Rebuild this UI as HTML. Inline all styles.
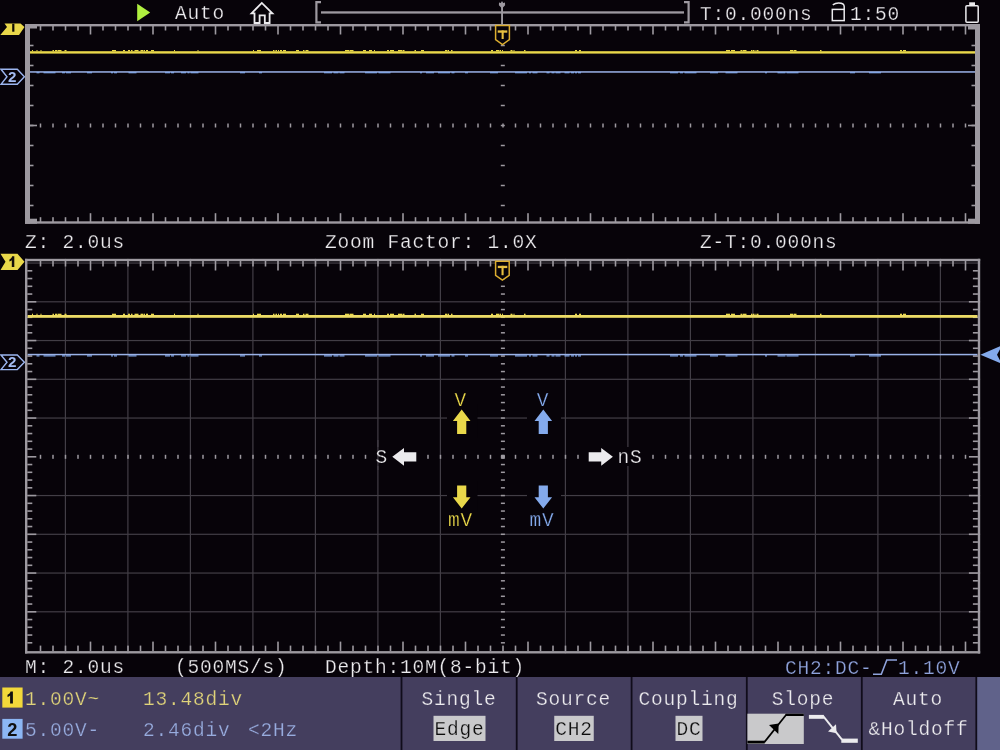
<!DOCTYPE html>
<html><head><meta charset="utf-8"><title>scope</title>
<style>html,body{margin:0;padding:0;background:#070309;width:1000px;height:750px;overflow:hidden}</style>
</head><body>
<svg width="1000" height="750" viewBox="0 0 1000 750" style="display:block;will-change:transform">
<rect width="1000" height="750" fill="#070309"/>
<g font-family='"Liberation Mono", monospace' style="white-space:pre">
<polygon points="137.2,3.7 150.2,12.4 137.2,21.3" fill="#b0f040"/>
<text x="175" y="19.3" fill="#ecebee" font-size="19.5" letter-spacing="0.8" stroke="#070309" stroke-width="0.25" >Auto</text>
<path d="M254.5,23 V13.3 H251.6 L261.8,2.9 L272.4,13.3 H269.6 V23 H264.8 V15.4 H259.6 V23 Z" fill="none" stroke="#ecebee" stroke-width="1.8" stroke-linejoin="miter"/>
<path d="M321,2.2 H316.4 V22.3 H321" fill="none" stroke="#9d99a0" stroke-width="2.2"/>
<path d="M684,2.2 H688.6 V22.3 H684" fill="none" stroke="#9d99a0" stroke-width="2.2"/>
<rect x="321.00" y="11.30" width="363.00" height="2.30" fill="#9d99a0"/>
<path d="M502,8.6 L498.9,5.2 L499,2.4 L500.8,2.9 L502,1.1 L503.2,2.9 L505,2.4 L505.1,5.2 Z" fill="#9d99a0"/>
<rect x="501.10" y="7.00" width="1.90" height="18.00" fill="#9d99a0"/>
<text x="700" y="19.5" fill="#ecebee" font-size="19.5" letter-spacing="0.8" stroke="#070309" stroke-width="0.25" >T:0.000ns</text>
<rect x="832.3" y="9.4" width="11.9" height="11.2" fill="none" stroke="#ecebee" stroke-width="1.5"/>
<path d="M844.2,9.4 V6.5 C844.2,3.5 841.5,2.9 838.6,2.9 C836,2.9 834.5,3.5 832.8,4.8" fill="none" stroke="#ecebee" stroke-width="1.5"/>
<text x="850" y="19.5" fill="#ecebee" font-size="19.5" letter-spacing="0.8" stroke="#070309" stroke-width="0.25" >1:50</text>
<rect x="965.9" y="5.8" width="12.3" height="16.4" rx="1" fill="none" stroke="#ecebee" stroke-width="1.5"/>
<rect x="969.20" y="2.30" width="5.80" height="3.00" fill="#ecebee"/>
<rect x="39.70" y="25.50" width="1.60" height="5.00" fill="#9d99a0"/>
<rect x="39.70" y="217.20" width="1.60" height="5.00" fill="#9d99a0"/>
<rect x="52.20" y="25.50" width="1.60" height="5.00" fill="#9d99a0"/>
<rect x="52.20" y="217.20" width="1.60" height="5.00" fill="#9d99a0"/>
<rect x="64.70" y="25.50" width="1.60" height="5.00" fill="#9d99a0"/>
<rect x="64.70" y="217.20" width="1.60" height="5.00" fill="#9d99a0"/>
<rect x="77.20" y="25.50" width="1.60" height="5.00" fill="#9d99a0"/>
<rect x="77.20" y="217.20" width="1.60" height="5.00" fill="#9d99a0"/>
<rect x="89.70" y="25.50" width="1.60" height="9.00" fill="#9d99a0"/>
<rect x="89.70" y="213.20" width="1.60" height="9.00" fill="#9d99a0"/>
<rect x="102.20" y="25.50" width="1.60" height="5.00" fill="#9d99a0"/>
<rect x="102.20" y="217.20" width="1.60" height="5.00" fill="#9d99a0"/>
<rect x="114.70" y="25.50" width="1.60" height="5.00" fill="#9d99a0"/>
<rect x="114.70" y="217.20" width="1.60" height="5.00" fill="#9d99a0"/>
<rect x="127.20" y="25.50" width="1.60" height="5.00" fill="#9d99a0"/>
<rect x="127.20" y="217.20" width="1.60" height="5.00" fill="#9d99a0"/>
<rect x="139.70" y="25.50" width="1.60" height="5.00" fill="#9d99a0"/>
<rect x="139.70" y="217.20" width="1.60" height="5.00" fill="#9d99a0"/>
<rect x="152.20" y="25.50" width="1.60" height="9.00" fill="#9d99a0"/>
<rect x="152.20" y="213.20" width="1.60" height="9.00" fill="#9d99a0"/>
<rect x="164.70" y="25.50" width="1.60" height="5.00" fill="#9d99a0"/>
<rect x="164.70" y="217.20" width="1.60" height="5.00" fill="#9d99a0"/>
<rect x="177.20" y="25.50" width="1.60" height="5.00" fill="#9d99a0"/>
<rect x="177.20" y="217.20" width="1.60" height="5.00" fill="#9d99a0"/>
<rect x="189.70" y="25.50" width="1.60" height="5.00" fill="#9d99a0"/>
<rect x="189.70" y="217.20" width="1.60" height="5.00" fill="#9d99a0"/>
<rect x="202.20" y="25.50" width="1.60" height="5.00" fill="#9d99a0"/>
<rect x="202.20" y="217.20" width="1.60" height="5.00" fill="#9d99a0"/>
<rect x="214.70" y="25.50" width="1.60" height="9.00" fill="#9d99a0"/>
<rect x="214.70" y="213.20" width="1.60" height="9.00" fill="#9d99a0"/>
<rect x="227.20" y="25.50" width="1.60" height="5.00" fill="#9d99a0"/>
<rect x="227.20" y="217.20" width="1.60" height="5.00" fill="#9d99a0"/>
<rect x="239.70" y="25.50" width="1.60" height="5.00" fill="#9d99a0"/>
<rect x="239.70" y="217.20" width="1.60" height="5.00" fill="#9d99a0"/>
<rect x="252.20" y="25.50" width="1.60" height="5.00" fill="#9d99a0"/>
<rect x="252.20" y="217.20" width="1.60" height="5.00" fill="#9d99a0"/>
<rect x="264.70" y="25.50" width="1.60" height="5.00" fill="#9d99a0"/>
<rect x="264.70" y="217.20" width="1.60" height="5.00" fill="#9d99a0"/>
<rect x="277.20" y="25.50" width="1.60" height="9.00" fill="#9d99a0"/>
<rect x="277.20" y="213.20" width="1.60" height="9.00" fill="#9d99a0"/>
<rect x="289.70" y="25.50" width="1.60" height="5.00" fill="#9d99a0"/>
<rect x="289.70" y="217.20" width="1.60" height="5.00" fill="#9d99a0"/>
<rect x="302.20" y="25.50" width="1.60" height="5.00" fill="#9d99a0"/>
<rect x="302.20" y="217.20" width="1.60" height="5.00" fill="#9d99a0"/>
<rect x="314.70" y="25.50" width="1.60" height="5.00" fill="#9d99a0"/>
<rect x="314.70" y="217.20" width="1.60" height="5.00" fill="#9d99a0"/>
<rect x="327.20" y="25.50" width="1.60" height="5.00" fill="#9d99a0"/>
<rect x="327.20" y="217.20" width="1.60" height="5.00" fill="#9d99a0"/>
<rect x="339.70" y="25.50" width="1.60" height="9.00" fill="#9d99a0"/>
<rect x="339.70" y="213.20" width="1.60" height="9.00" fill="#9d99a0"/>
<rect x="352.20" y="25.50" width="1.60" height="5.00" fill="#9d99a0"/>
<rect x="352.20" y="217.20" width="1.60" height="5.00" fill="#9d99a0"/>
<rect x="364.70" y="25.50" width="1.60" height="5.00" fill="#9d99a0"/>
<rect x="364.70" y="217.20" width="1.60" height="5.00" fill="#9d99a0"/>
<rect x="377.20" y="25.50" width="1.60" height="5.00" fill="#9d99a0"/>
<rect x="377.20" y="217.20" width="1.60" height="5.00" fill="#9d99a0"/>
<rect x="389.70" y="25.50" width="1.60" height="5.00" fill="#9d99a0"/>
<rect x="389.70" y="217.20" width="1.60" height="5.00" fill="#9d99a0"/>
<rect x="402.20" y="25.50" width="1.60" height="9.00" fill="#9d99a0"/>
<rect x="402.20" y="213.20" width="1.60" height="9.00" fill="#9d99a0"/>
<rect x="414.70" y="25.50" width="1.60" height="5.00" fill="#9d99a0"/>
<rect x="414.70" y="217.20" width="1.60" height="5.00" fill="#9d99a0"/>
<rect x="427.20" y="25.50" width="1.60" height="5.00" fill="#9d99a0"/>
<rect x="427.20" y="217.20" width="1.60" height="5.00" fill="#9d99a0"/>
<rect x="439.70" y="25.50" width="1.60" height="5.00" fill="#9d99a0"/>
<rect x="439.70" y="217.20" width="1.60" height="5.00" fill="#9d99a0"/>
<rect x="452.20" y="25.50" width="1.60" height="5.00" fill="#9d99a0"/>
<rect x="452.20" y="217.20" width="1.60" height="5.00" fill="#9d99a0"/>
<rect x="464.70" y="25.50" width="1.60" height="9.00" fill="#9d99a0"/>
<rect x="464.70" y="213.20" width="1.60" height="9.00" fill="#9d99a0"/>
<rect x="477.20" y="25.50" width="1.60" height="5.00" fill="#9d99a0"/>
<rect x="477.20" y="217.20" width="1.60" height="5.00" fill="#9d99a0"/>
<rect x="489.70" y="25.50" width="1.60" height="5.00" fill="#9d99a0"/>
<rect x="489.70" y="217.20" width="1.60" height="5.00" fill="#9d99a0"/>
<rect x="502.20" y="25.50" width="1.60" height="5.00" fill="#9d99a0"/>
<rect x="502.20" y="217.20" width="1.60" height="5.00" fill="#9d99a0"/>
<rect x="514.70" y="25.50" width="1.60" height="5.00" fill="#9d99a0"/>
<rect x="514.70" y="217.20" width="1.60" height="5.00" fill="#9d99a0"/>
<rect x="527.20" y="25.50" width="1.60" height="9.00" fill="#9d99a0"/>
<rect x="527.20" y="213.20" width="1.60" height="9.00" fill="#9d99a0"/>
<rect x="539.70" y="25.50" width="1.60" height="5.00" fill="#9d99a0"/>
<rect x="539.70" y="217.20" width="1.60" height="5.00" fill="#9d99a0"/>
<rect x="552.20" y="25.50" width="1.60" height="5.00" fill="#9d99a0"/>
<rect x="552.20" y="217.20" width="1.60" height="5.00" fill="#9d99a0"/>
<rect x="564.70" y="25.50" width="1.60" height="5.00" fill="#9d99a0"/>
<rect x="564.70" y="217.20" width="1.60" height="5.00" fill="#9d99a0"/>
<rect x="577.20" y="25.50" width="1.60" height="5.00" fill="#9d99a0"/>
<rect x="577.20" y="217.20" width="1.60" height="5.00" fill="#9d99a0"/>
<rect x="589.70" y="25.50" width="1.60" height="9.00" fill="#9d99a0"/>
<rect x="589.70" y="213.20" width="1.60" height="9.00" fill="#9d99a0"/>
<rect x="602.20" y="25.50" width="1.60" height="5.00" fill="#9d99a0"/>
<rect x="602.20" y="217.20" width="1.60" height="5.00" fill="#9d99a0"/>
<rect x="614.70" y="25.50" width="1.60" height="5.00" fill="#9d99a0"/>
<rect x="614.70" y="217.20" width="1.60" height="5.00" fill="#9d99a0"/>
<rect x="627.20" y="25.50" width="1.60" height="5.00" fill="#9d99a0"/>
<rect x="627.20" y="217.20" width="1.60" height="5.00" fill="#9d99a0"/>
<rect x="639.70" y="25.50" width="1.60" height="5.00" fill="#9d99a0"/>
<rect x="639.70" y="217.20" width="1.60" height="5.00" fill="#9d99a0"/>
<rect x="652.20" y="25.50" width="1.60" height="9.00" fill="#9d99a0"/>
<rect x="652.20" y="213.20" width="1.60" height="9.00" fill="#9d99a0"/>
<rect x="664.70" y="25.50" width="1.60" height="5.00" fill="#9d99a0"/>
<rect x="664.70" y="217.20" width="1.60" height="5.00" fill="#9d99a0"/>
<rect x="677.20" y="25.50" width="1.60" height="5.00" fill="#9d99a0"/>
<rect x="677.20" y="217.20" width="1.60" height="5.00" fill="#9d99a0"/>
<rect x="689.70" y="25.50" width="1.60" height="5.00" fill="#9d99a0"/>
<rect x="689.70" y="217.20" width="1.60" height="5.00" fill="#9d99a0"/>
<rect x="702.20" y="25.50" width="1.60" height="5.00" fill="#9d99a0"/>
<rect x="702.20" y="217.20" width="1.60" height="5.00" fill="#9d99a0"/>
<rect x="714.70" y="25.50" width="1.60" height="9.00" fill="#9d99a0"/>
<rect x="714.70" y="213.20" width="1.60" height="9.00" fill="#9d99a0"/>
<rect x="727.20" y="25.50" width="1.60" height="5.00" fill="#9d99a0"/>
<rect x="727.20" y="217.20" width="1.60" height="5.00" fill="#9d99a0"/>
<rect x="739.70" y="25.50" width="1.60" height="5.00" fill="#9d99a0"/>
<rect x="739.70" y="217.20" width="1.60" height="5.00" fill="#9d99a0"/>
<rect x="752.20" y="25.50" width="1.60" height="5.00" fill="#9d99a0"/>
<rect x="752.20" y="217.20" width="1.60" height="5.00" fill="#9d99a0"/>
<rect x="764.70" y="25.50" width="1.60" height="5.00" fill="#9d99a0"/>
<rect x="764.70" y="217.20" width="1.60" height="5.00" fill="#9d99a0"/>
<rect x="777.20" y="25.50" width="1.60" height="9.00" fill="#9d99a0"/>
<rect x="777.20" y="213.20" width="1.60" height="9.00" fill="#9d99a0"/>
<rect x="789.70" y="25.50" width="1.60" height="5.00" fill="#9d99a0"/>
<rect x="789.70" y="217.20" width="1.60" height="5.00" fill="#9d99a0"/>
<rect x="802.20" y="25.50" width="1.60" height="5.00" fill="#9d99a0"/>
<rect x="802.20" y="217.20" width="1.60" height="5.00" fill="#9d99a0"/>
<rect x="814.70" y="25.50" width="1.60" height="5.00" fill="#9d99a0"/>
<rect x="814.70" y="217.20" width="1.60" height="5.00" fill="#9d99a0"/>
<rect x="827.20" y="25.50" width="1.60" height="5.00" fill="#9d99a0"/>
<rect x="827.20" y="217.20" width="1.60" height="5.00" fill="#9d99a0"/>
<rect x="839.70" y="25.50" width="1.60" height="9.00" fill="#9d99a0"/>
<rect x="839.70" y="213.20" width="1.60" height="9.00" fill="#9d99a0"/>
<rect x="852.20" y="25.50" width="1.60" height="5.00" fill="#9d99a0"/>
<rect x="852.20" y="217.20" width="1.60" height="5.00" fill="#9d99a0"/>
<rect x="864.70" y="25.50" width="1.60" height="5.00" fill="#9d99a0"/>
<rect x="864.70" y="217.20" width="1.60" height="5.00" fill="#9d99a0"/>
<rect x="877.20" y="25.50" width="1.60" height="5.00" fill="#9d99a0"/>
<rect x="877.20" y="217.20" width="1.60" height="5.00" fill="#9d99a0"/>
<rect x="889.70" y="25.50" width="1.60" height="5.00" fill="#9d99a0"/>
<rect x="889.70" y="217.20" width="1.60" height="5.00" fill="#9d99a0"/>
<rect x="902.20" y="25.50" width="1.60" height="9.00" fill="#9d99a0"/>
<rect x="902.20" y="213.20" width="1.60" height="9.00" fill="#9d99a0"/>
<rect x="914.70" y="25.50" width="1.60" height="5.00" fill="#9d99a0"/>
<rect x="914.70" y="217.20" width="1.60" height="5.00" fill="#9d99a0"/>
<rect x="927.20" y="25.50" width="1.60" height="5.00" fill="#9d99a0"/>
<rect x="927.20" y="217.20" width="1.60" height="5.00" fill="#9d99a0"/>
<rect x="939.70" y="25.50" width="1.60" height="5.00" fill="#9d99a0"/>
<rect x="939.70" y="217.20" width="1.60" height="5.00" fill="#9d99a0"/>
<rect x="952.20" y="25.50" width="1.60" height="5.00" fill="#9d99a0"/>
<rect x="952.20" y="217.20" width="1.60" height="5.00" fill="#9d99a0"/>
<rect x="964.70" y="25.50" width="1.60" height="9.00" fill="#9d99a0"/>
<rect x="964.70" y="213.20" width="1.60" height="9.00" fill="#9d99a0"/>
<rect x="30.00" y="44.70" width="3.50" height="1.60" fill="#9d99a0"/>
<rect x="971.50" y="44.70" width="3.50" height="1.60" fill="#9d99a0"/>
<rect x="30.00" y="64.70" width="3.50" height="1.60" fill="#9d99a0"/>
<rect x="971.50" y="64.70" width="3.50" height="1.60" fill="#9d99a0"/>
<rect x="30.00" y="84.70" width="3.50" height="1.60" fill="#9d99a0"/>
<rect x="971.50" y="84.70" width="3.50" height="1.60" fill="#9d99a0"/>
<rect x="30.00" y="104.70" width="3.50" height="1.60" fill="#9d99a0"/>
<rect x="971.50" y="104.70" width="3.50" height="1.60" fill="#9d99a0"/>
<rect x="30.00" y="124.70" width="3.50" height="1.60" fill="#9d99a0"/>
<rect x="971.50" y="124.70" width="3.50" height="1.60" fill="#9d99a0"/>
<rect x="30.00" y="144.70" width="3.50" height="1.60" fill="#9d99a0"/>
<rect x="971.50" y="144.70" width="3.50" height="1.60" fill="#9d99a0"/>
<rect x="30.00" y="164.70" width="3.50" height="1.60" fill="#9d99a0"/>
<rect x="971.50" y="164.70" width="3.50" height="1.60" fill="#9d99a0"/>
<rect x="30.00" y="184.70" width="3.50" height="1.60" fill="#9d99a0"/>
<rect x="971.50" y="184.70" width="3.50" height="1.60" fill="#9d99a0"/>
<rect x="30.00" y="204.70" width="3.50" height="1.60" fill="#9d99a0"/>
<rect x="971.50" y="204.70" width="3.50" height="1.60" fill="#9d99a0"/>
<rect x="30.00" y="124.70" width="7.00" height="1.60" fill="#9d99a0"/>
<rect x="968.00" y="124.70" width="7.00" height="1.60" fill="#9d99a0"/>
<rect x="39.75" y="123.50" width="1.50" height="4.00" fill="#9d99a0"/>
<rect x="52.25" y="123.50" width="1.50" height="4.00" fill="#9d99a0"/>
<rect x="64.75" y="123.50" width="1.50" height="4.00" fill="#9d99a0"/>
<rect x="77.25" y="123.50" width="1.50" height="4.00" fill="#9d99a0"/>
<rect x="89.75" y="123.50" width="1.50" height="4.00" fill="#9d99a0"/>
<rect x="102.25" y="123.50" width="1.50" height="4.00" fill="#9d99a0"/>
<rect x="114.75" y="123.50" width="1.50" height="4.00" fill="#9d99a0"/>
<rect x="127.25" y="123.50" width="1.50" height="4.00" fill="#9d99a0"/>
<rect x="139.75" y="123.50" width="1.50" height="4.00" fill="#9d99a0"/>
<rect x="152.25" y="123.50" width="1.50" height="4.00" fill="#9d99a0"/>
<rect x="164.75" y="123.50" width="1.50" height="4.00" fill="#9d99a0"/>
<rect x="177.25" y="123.50" width="1.50" height="4.00" fill="#9d99a0"/>
<rect x="189.75" y="123.50" width="1.50" height="4.00" fill="#9d99a0"/>
<rect x="202.25" y="123.50" width="1.50" height="4.00" fill="#9d99a0"/>
<rect x="214.75" y="123.50" width="1.50" height="4.00" fill="#9d99a0"/>
<rect x="227.25" y="123.50" width="1.50" height="4.00" fill="#9d99a0"/>
<rect x="239.75" y="123.50" width="1.50" height="4.00" fill="#9d99a0"/>
<rect x="252.25" y="123.50" width="1.50" height="4.00" fill="#9d99a0"/>
<rect x="264.75" y="123.50" width="1.50" height="4.00" fill="#9d99a0"/>
<rect x="277.25" y="123.50" width="1.50" height="4.00" fill="#9d99a0"/>
<rect x="289.75" y="123.50" width="1.50" height="4.00" fill="#9d99a0"/>
<rect x="302.25" y="123.50" width="1.50" height="4.00" fill="#9d99a0"/>
<rect x="314.75" y="123.50" width="1.50" height="4.00" fill="#9d99a0"/>
<rect x="327.25" y="123.50" width="1.50" height="4.00" fill="#9d99a0"/>
<rect x="339.75" y="123.50" width="1.50" height="4.00" fill="#9d99a0"/>
<rect x="352.25" y="123.50" width="1.50" height="4.00" fill="#9d99a0"/>
<rect x="364.75" y="123.50" width="1.50" height="4.00" fill="#9d99a0"/>
<rect x="377.25" y="123.50" width="1.50" height="4.00" fill="#9d99a0"/>
<rect x="389.75" y="123.50" width="1.50" height="4.00" fill="#9d99a0"/>
<rect x="402.25" y="123.50" width="1.50" height="4.00" fill="#9d99a0"/>
<rect x="414.75" y="123.50" width="1.50" height="4.00" fill="#9d99a0"/>
<rect x="427.25" y="123.50" width="1.50" height="4.00" fill="#9d99a0"/>
<rect x="439.75" y="123.50" width="1.50" height="4.00" fill="#9d99a0"/>
<rect x="452.25" y="123.50" width="1.50" height="4.00" fill="#9d99a0"/>
<rect x="464.75" y="123.50" width="1.50" height="4.00" fill="#9d99a0"/>
<rect x="477.25" y="123.50" width="1.50" height="4.00" fill="#9d99a0"/>
<rect x="489.75" y="123.50" width="1.50" height="4.00" fill="#9d99a0"/>
<rect x="502.25" y="123.50" width="1.50" height="4.00" fill="#9d99a0"/>
<rect x="514.75" y="123.50" width="1.50" height="4.00" fill="#9d99a0"/>
<rect x="527.25" y="123.50" width="1.50" height="4.00" fill="#9d99a0"/>
<rect x="539.75" y="123.50" width="1.50" height="4.00" fill="#9d99a0"/>
<rect x="552.25" y="123.50" width="1.50" height="4.00" fill="#9d99a0"/>
<rect x="564.75" y="123.50" width="1.50" height="4.00" fill="#9d99a0"/>
<rect x="577.25" y="123.50" width="1.50" height="4.00" fill="#9d99a0"/>
<rect x="589.75" y="123.50" width="1.50" height="4.00" fill="#9d99a0"/>
<rect x="602.25" y="123.50" width="1.50" height="4.00" fill="#9d99a0"/>
<rect x="614.75" y="123.50" width="1.50" height="4.00" fill="#9d99a0"/>
<rect x="627.25" y="123.50" width="1.50" height="4.00" fill="#9d99a0"/>
<rect x="639.75" y="123.50" width="1.50" height="4.00" fill="#9d99a0"/>
<rect x="652.25" y="123.50" width="1.50" height="4.00" fill="#9d99a0"/>
<rect x="664.75" y="123.50" width="1.50" height="4.00" fill="#9d99a0"/>
<rect x="677.25" y="123.50" width="1.50" height="4.00" fill="#9d99a0"/>
<rect x="689.75" y="123.50" width="1.50" height="4.00" fill="#9d99a0"/>
<rect x="702.25" y="123.50" width="1.50" height="4.00" fill="#9d99a0"/>
<rect x="714.75" y="123.50" width="1.50" height="4.00" fill="#9d99a0"/>
<rect x="727.25" y="123.50" width="1.50" height="4.00" fill="#9d99a0"/>
<rect x="739.75" y="123.50" width="1.50" height="4.00" fill="#9d99a0"/>
<rect x="752.25" y="123.50" width="1.50" height="4.00" fill="#9d99a0"/>
<rect x="764.75" y="123.50" width="1.50" height="4.00" fill="#9d99a0"/>
<rect x="777.25" y="123.50" width="1.50" height="4.00" fill="#9d99a0"/>
<rect x="789.75" y="123.50" width="1.50" height="4.00" fill="#9d99a0"/>
<rect x="802.25" y="123.50" width="1.50" height="4.00" fill="#9d99a0"/>
<rect x="814.75" y="123.50" width="1.50" height="4.00" fill="#9d99a0"/>
<rect x="827.25" y="123.50" width="1.50" height="4.00" fill="#9d99a0"/>
<rect x="839.75" y="123.50" width="1.50" height="4.00" fill="#9d99a0"/>
<rect x="852.25" y="123.50" width="1.50" height="4.00" fill="#9d99a0"/>
<rect x="864.75" y="123.50" width="1.50" height="4.00" fill="#9d99a0"/>
<rect x="877.25" y="123.50" width="1.50" height="4.00" fill="#9d99a0"/>
<rect x="889.75" y="123.50" width="1.50" height="4.00" fill="#9d99a0"/>
<rect x="902.25" y="123.50" width="1.50" height="4.00" fill="#9d99a0"/>
<rect x="914.75" y="123.50" width="1.50" height="4.00" fill="#9d99a0"/>
<rect x="927.25" y="123.50" width="1.50" height="4.00" fill="#9d99a0"/>
<rect x="939.75" y="123.50" width="1.50" height="4.00" fill="#9d99a0"/>
<rect x="952.25" y="123.50" width="1.50" height="4.00" fill="#9d99a0"/>
<rect x="964.75" y="123.50" width="1.50" height="4.00" fill="#9d99a0"/>
<rect x="500.80" y="44.75" width="4.00" height="1.50" fill="#9d99a0"/>
<rect x="500.80" y="64.75" width="4.00" height="1.50" fill="#9d99a0"/>
<rect x="500.80" y="84.75" width="4.00" height="1.50" fill="#9d99a0"/>
<rect x="500.80" y="104.75" width="4.00" height="1.50" fill="#9d99a0"/>
<rect x="500.80" y="124.75" width="4.00" height="1.50" fill="#9d99a0"/>
<rect x="500.80" y="144.75" width="4.00" height="1.50" fill="#9d99a0"/>
<rect x="500.80" y="164.75" width="4.00" height="1.50" fill="#9d99a0"/>
<rect x="500.80" y="184.75" width="4.00" height="1.50" fill="#9d99a0"/>
<rect x="500.80" y="204.75" width="4.00" height="1.50" fill="#9d99a0"/>
<rect x="30.00" y="51.20" width="945.00" height="2.40" fill="#e9d84a"/>
<rect x="30.00" y="71.20" width="945.00" height="1.50" fill="#9ab2e8"/>
<rect x="32.00" y="50.00" width="1.00" height="1.30" fill="#e9d84a"/>
<rect x="36.50" y="50.00" width="1.00" height="1.30" fill="#e9d84a"/>
<rect x="40.50" y="50.00" width="1.00" height="1.30" fill="#e9d84a"/>
<rect x="52.50" y="50.00" width="1.50" height="1.30" fill="#e9d84a"/>
<rect x="55.00" y="50.00" width="2.00" height="1.30" fill="#e9d84a"/>
<rect x="57.50" y="50.00" width="4.00" height="1.30" fill="#e9d84a"/>
<rect x="64.50" y="50.00" width="2.00" height="1.30" fill="#e9d84a"/>
<rect x="112.00" y="50.00" width="4.00" height="1.30" fill="#e9d84a"/>
<rect x="123.00" y="50.00" width="2.00" height="1.30" fill="#e9d84a"/>
<rect x="128.00" y="50.00" width="2.00" height="1.30" fill="#e9d84a"/>
<rect x="131.00" y="50.00" width="1.50" height="1.30" fill="#e9d84a"/>
<rect x="134.50" y="50.00" width="4.00" height="1.30" fill="#e9d84a"/>
<rect x="140.50" y="50.00" width="3.00" height="1.30" fill="#e9d84a"/>
<rect x="144.00" y="50.00" width="1.00" height="1.30" fill="#e9d84a"/>
<rect x="146.00" y="50.00" width="2.00" height="1.30" fill="#e9d84a"/>
<rect x="151.00" y="50.00" width="3.00" height="1.30" fill="#e9d84a"/>
<rect x="174.00" y="50.00" width="1.00" height="1.30" fill="#e9d84a"/>
<rect x="197.50" y="50.00" width="1.00" height="1.30" fill="#e9d84a"/>
<rect x="253.00" y="50.00" width="1.00" height="1.30" fill="#e9d84a"/>
<rect x="257.00" y="50.00" width="4.00" height="1.30" fill="#e9d84a"/>
<rect x="273.00" y="50.00" width="1.50" height="1.30" fill="#e9d84a"/>
<rect x="275.50" y="50.00" width="1.50" height="1.30" fill="#e9d84a"/>
<rect x="278.00" y="50.00" width="1.00" height="1.30" fill="#e9d84a"/>
<rect x="280.00" y="50.00" width="2.00" height="1.30" fill="#e9d84a"/>
<rect x="283.00" y="50.00" width="3.00" height="1.30" fill="#e9d84a"/>
<rect x="296.00" y="50.00" width="3.00" height="1.30" fill="#e9d84a"/>
<rect x="303.00" y="50.00" width="1.50" height="1.30" fill="#e9d84a"/>
<rect x="305.50" y="50.00" width="3.00" height="1.30" fill="#e9d84a"/>
<rect x="345.00" y="50.00" width="4.00" height="1.30" fill="#e9d84a"/>
<rect x="349.50" y="50.00" width="4.00" height="1.30" fill="#e9d84a"/>
<rect x="363.00" y="50.00" width="3.00" height="1.30" fill="#e9d84a"/>
<rect x="369.00" y="50.00" width="3.00" height="1.30" fill="#e9d84a"/>
<rect x="374.00" y="50.00" width="1.00" height="1.30" fill="#e9d84a"/>
<rect x="387.00" y="50.00" width="2.00" height="1.30" fill="#e9d84a"/>
<rect x="390.00" y="50.00" width="4.00" height="1.30" fill="#e9d84a"/>
<rect x="398.00" y="50.00" width="4.00" height="1.30" fill="#e9d84a"/>
<rect x="402.50" y="50.00" width="2.00" height="1.30" fill="#e9d84a"/>
<rect x="414.50" y="50.00" width="1.50" height="1.30" fill="#e9d84a"/>
<rect x="421.00" y="50.00" width="3.00" height="1.30" fill="#e9d84a"/>
<rect x="445.00" y="50.00" width="2.00" height="1.30" fill="#e9d84a"/>
<rect x="447.50" y="50.00" width="1.50" height="1.30" fill="#e9d84a"/>
<rect x="451.00" y="50.00" width="1.50" height="1.30" fill="#e9d84a"/>
<rect x="491.00" y="50.00" width="2.00" height="1.30" fill="#e9d84a"/>
<rect x="496.00" y="50.00" width="3.00" height="1.30" fill="#e9d84a"/>
<rect x="499.50" y="50.00" width="1.50" height="1.30" fill="#e9d84a"/>
<rect x="502.00" y="50.00" width="1.00" height="1.30" fill="#e9d84a"/>
<rect x="510.50" y="50.00" width="2.00" height="1.30" fill="#e9d84a"/>
<rect x="513.50" y="50.00" width="1.00" height="1.30" fill="#e9d84a"/>
<rect x="524.00" y="50.00" width="1.50" height="1.30" fill="#e9d84a"/>
<rect x="575.00" y="50.00" width="2.00" height="1.30" fill="#e9d84a"/>
<rect x="579.00" y="50.00" width="2.00" height="1.30" fill="#e9d84a"/>
<rect x="726.00" y="50.00" width="4.00" height="1.30" fill="#e9d84a"/>
<rect x="731.00" y="50.00" width="4.00" height="1.30" fill="#e9d84a"/>
<rect x="740.50" y="50.00" width="1.50" height="1.30" fill="#e9d84a"/>
<rect x="742.50" y="50.00" width="4.00" height="1.30" fill="#e9d84a"/>
<rect x="751.00" y="50.00" width="1.50" height="1.30" fill="#e9d84a"/>
<rect x="753.00" y="50.00" width="1.00" height="1.30" fill="#e9d84a"/>
<rect x="754.50" y="50.00" width="1.00" height="1.30" fill="#e9d84a"/>
<rect x="756.50" y="50.00" width="2.00" height="1.30" fill="#e9d84a"/>
<rect x="790.00" y="50.00" width="3.00" height="1.30" fill="#e9d84a"/>
<rect x="793.50" y="50.00" width="3.00" height="1.30" fill="#e9d84a"/>
<rect x="820.00" y="50.00" width="1.50" height="1.30" fill="#e9d84a"/>
<rect x="900.00" y="50.00" width="2.00" height="1.30" fill="#e9d84a"/>
<rect x="903.00" y="50.00" width="3.00" height="1.30" fill="#e9d84a"/>
<rect x="36.50" y="72.10" width="3.00" height="1.20" fill="#84aaec"/>
<rect x="43.50" y="72.10" width="12.00" height="1.20" fill="#84aaec"/>
<rect x="62.00" y="72.10" width="3.00" height="1.20" fill="#84aaec"/>
<rect x="66.00" y="72.10" width="5.00" height="1.20" fill="#84aaec"/>
<rect x="87.00" y="72.10" width="5.00" height="1.20" fill="#84aaec"/>
<rect x="111.00" y="72.10" width="2.00" height="1.20" fill="#84aaec"/>
<rect x="114.00" y="72.10" width="3.00" height="1.20" fill="#84aaec"/>
<rect x="128.50" y="72.10" width="8.00" height="1.20" fill="#84aaec"/>
<rect x="165.00" y="72.10" width="5.00" height="1.20" fill="#84aaec"/>
<rect x="171.00" y="72.10" width="3.00" height="1.20" fill="#84aaec"/>
<rect x="181.00" y="72.10" width="5.00" height="1.20" fill="#84aaec"/>
<rect x="187.50" y="72.10" width="2.00" height="1.20" fill="#84aaec"/>
<rect x="190.50" y="72.10" width="8.00" height="1.20" fill="#84aaec"/>
<rect x="240.00" y="72.10" width="5.00" height="1.20" fill="#84aaec"/>
<rect x="259.00" y="72.10" width="3.00" height="1.20" fill="#84aaec"/>
<rect x="324.00" y="72.10" width="8.00" height="1.20" fill="#84aaec"/>
<rect x="333.50" y="72.10" width="5.00" height="1.20" fill="#84aaec"/>
<rect x="339.50" y="72.10" width="5.00" height="1.20" fill="#84aaec"/>
<rect x="365.00" y="72.10" width="12.00" height="1.20" fill="#84aaec"/>
<rect x="378.50" y="72.10" width="12.00" height="1.20" fill="#84aaec"/>
<rect x="420.00" y="72.10" width="2.00" height="1.20" fill="#84aaec"/>
<rect x="426.00" y="72.10" width="8.00" height="1.20" fill="#84aaec"/>
<rect x="438.00" y="72.10" width="12.00" height="1.20" fill="#84aaec"/>
<rect x="451.50" y="72.10" width="3.00" height="1.20" fill="#84aaec"/>
<rect x="465.00" y="72.10" width="3.00" height="1.20" fill="#84aaec"/>
<rect x="490.00" y="72.10" width="8.00" height="1.20" fill="#84aaec"/>
<rect x="515.00" y="72.10" width="12.00" height="1.20" fill="#84aaec"/>
<rect x="529.00" y="72.10" width="2.00" height="1.20" fill="#84aaec"/>
<rect x="532.50" y="72.10" width="5.00" height="1.20" fill="#84aaec"/>
<rect x="546.50" y="72.10" width="3.00" height="1.20" fill="#84aaec"/>
<rect x="551.50" y="72.10" width="3.00" height="1.20" fill="#84aaec"/>
<rect x="555.50" y="72.10" width="5.00" height="1.20" fill="#84aaec"/>
<rect x="564.50" y="72.10" width="5.00" height="1.20" fill="#84aaec"/>
<rect x="571.00" y="72.10" width="3.00" height="1.20" fill="#84aaec"/>
<rect x="575.00" y="72.10" width="2.00" height="1.20" fill="#84aaec"/>
<rect x="578.00" y="72.10" width="3.00" height="1.20" fill="#84aaec"/>
<rect x="670.00" y="72.10" width="8.00" height="1.20" fill="#84aaec"/>
<rect x="680.00" y="72.10" width="3.00" height="1.20" fill="#84aaec"/>
<rect x="684.50" y="72.10" width="12.00" height="1.20" fill="#84aaec"/>
<rect x="710.00" y="72.10" width="8.00" height="1.20" fill="#84aaec"/>
<rect x="725.50" y="72.10" width="12.00" height="1.20" fill="#84aaec"/>
<rect x="765.00" y="72.10" width="2.00" height="1.20" fill="#84aaec"/>
<rect x="777.50" y="72.10" width="8.00" height="1.20" fill="#84aaec"/>
<rect x="786.50" y="72.10" width="12.00" height="1.20" fill="#84aaec"/>
<rect x="850.00" y="72.10" width="5.00" height="1.20" fill="#84aaec"/>
<rect x="869.00" y="72.10" width="12.00" height="1.20" fill="#84aaec"/>
<rect x="25.00" y="24.00" width="955.00" height="2.40" fill="#9d99a0"/>
<rect x="25.00" y="221.30" width="955.00" height="2.40" fill="#9d99a0"/>
<rect x="25.00" y="24.00" width="5.00" height="199.70" fill="#9d99a0"/>
<rect x="975.00" y="24.00" width="5.00" height="199.70" fill="#9d99a0"/>
<rect x="25.00" y="24.00" width="12.00" height="4.50" fill="#9d99a0"/>
<rect x="25.00" y="218.70" width="12.00" height="5.00" fill="#9d99a0"/>
<rect x="968.00" y="24.00" width="12.00" height="5.50" fill="#9d99a0"/>
<rect x="968.00" y="218.70" width="12.00" height="5.00" fill="#9d99a0"/>
<path d="M495.6,25.6 H509.4 V39.5 L502.5,44.6 L495.6,39.5 Z" fill="#070309" stroke="#dcae30" stroke-width="1.5"/>
<rect x="497.70" y="30.40" width="9.60" height="2.30" fill="#e8c040"/>
<rect x="501.60" y="30.40" width="2.10" height="8.60" fill="#e8c040"/>
<polygon points="4.5,23.5 20.5,23.5 24.5,27 19,35 0.3,35 7,27" fill="#e9d84a"/>
<rect x="12.20" y="23.70" width="2.20" height="8.00" fill="#100c04"/>
<path d="M1,69.3 H17.3 L24.4,76.8 L17.3,84.3 H1 L7,76.8 Z" fill="#070309" stroke="#9cb6f0" stroke-width="1.4"/>
<text x="8.0" y="81.7" fill="#a4bcf2" font-size="15.2" letter-spacing="0"  font-family="Liberation Sans" font-weight="bold">2</text>
<text x="25" y="247.6" fill="#ecebee" font-size="19.5" letter-spacing="0.8" stroke="#070309" stroke-width="0.25" >Z:&#160;2.0us</text>
<text x="325" y="247.6" fill="#ecebee" font-size="19.5" letter-spacing="0.8" stroke="#070309" stroke-width="0.25" >Zoom&#160;Factor:&#160;1.0X</text>
<text x="700" y="247.6" fill="#ecebee" font-size="19.5" letter-spacing="0.8" stroke="#070309" stroke-width="0.25" >Z-T:0.000ns</text>
<rect x="64.80" y="258.80" width="1.20" height="394.70" fill="#423e46"/>
<rect x="127.30" y="258.80" width="1.20" height="394.70" fill="#423e46"/>
<rect x="189.80" y="258.80" width="1.20" height="394.70" fill="#423e46"/>
<rect x="252.30" y="258.80" width="1.20" height="394.70" fill="#423e46"/>
<rect x="314.80" y="258.80" width="1.20" height="394.70" fill="#423e46"/>
<rect x="377.30" y="258.80" width="1.20" height="394.70" fill="#423e46"/>
<rect x="439.80" y="258.80" width="1.20" height="394.70" fill="#423e46"/>
<rect x="564.80" y="258.80" width="1.20" height="394.70" fill="#423e46"/>
<rect x="627.30" y="258.80" width="1.20" height="394.70" fill="#423e46"/>
<rect x="689.80" y="258.80" width="1.20" height="394.70" fill="#423e46"/>
<rect x="752.30" y="258.80" width="1.20" height="394.70" fill="#423e46"/>
<rect x="814.80" y="258.80" width="1.20" height="394.70" fill="#423e46"/>
<rect x="877.30" y="258.80" width="1.20" height="394.70" fill="#423e46"/>
<rect x="939.80" y="258.80" width="1.20" height="394.70" fill="#423e46"/>
<rect x="25.00" y="262.45" width="955.20" height="1.20" fill="#423e46"/>
<rect x="25.00" y="301.20" width="955.20" height="1.20" fill="#423e46"/>
<rect x="25.00" y="339.95" width="955.20" height="1.20" fill="#423e46"/>
<rect x="25.00" y="378.70" width="955.20" height="1.20" fill="#423e46"/>
<rect x="25.00" y="417.45" width="955.20" height="1.20" fill="#423e46"/>
<rect x="25.00" y="494.95" width="955.20" height="1.20" fill="#423e46"/>
<rect x="25.00" y="533.70" width="955.20" height="1.20" fill="#423e46"/>
<rect x="25.00" y="572.45" width="955.20" height="1.20" fill="#423e46"/>
<rect x="25.00" y="611.20" width="955.20" height="1.20" fill="#423e46"/>
<rect x="39.70" y="261.00" width="1.60" height="5.50" fill="#9d99a0"/>
<rect x="39.70" y="645.60" width="1.60" height="5.50" fill="#9d99a0"/>
<rect x="52.20" y="261.00" width="1.60" height="5.50" fill="#9d99a0"/>
<rect x="52.20" y="645.60" width="1.60" height="5.50" fill="#9d99a0"/>
<rect x="64.70" y="261.00" width="1.60" height="5.50" fill="#9d99a0"/>
<rect x="64.70" y="645.60" width="1.60" height="5.50" fill="#9d99a0"/>
<rect x="77.20" y="261.00" width="1.60" height="5.50" fill="#9d99a0"/>
<rect x="77.20" y="645.60" width="1.60" height="5.50" fill="#9d99a0"/>
<rect x="89.70" y="261.00" width="1.60" height="9.50" fill="#9d99a0"/>
<rect x="89.70" y="641.60" width="1.60" height="9.50" fill="#9d99a0"/>
<rect x="102.20" y="261.00" width="1.60" height="5.50" fill="#9d99a0"/>
<rect x="102.20" y="645.60" width="1.60" height="5.50" fill="#9d99a0"/>
<rect x="114.70" y="261.00" width="1.60" height="5.50" fill="#9d99a0"/>
<rect x="114.70" y="645.60" width="1.60" height="5.50" fill="#9d99a0"/>
<rect x="127.20" y="261.00" width="1.60" height="5.50" fill="#9d99a0"/>
<rect x="127.20" y="645.60" width="1.60" height="5.50" fill="#9d99a0"/>
<rect x="139.70" y="261.00" width="1.60" height="5.50" fill="#9d99a0"/>
<rect x="139.70" y="645.60" width="1.60" height="5.50" fill="#9d99a0"/>
<rect x="152.20" y="261.00" width="1.60" height="9.50" fill="#9d99a0"/>
<rect x="152.20" y="641.60" width="1.60" height="9.50" fill="#9d99a0"/>
<rect x="164.70" y="261.00" width="1.60" height="5.50" fill="#9d99a0"/>
<rect x="164.70" y="645.60" width="1.60" height="5.50" fill="#9d99a0"/>
<rect x="177.20" y="261.00" width="1.60" height="5.50" fill="#9d99a0"/>
<rect x="177.20" y="645.60" width="1.60" height="5.50" fill="#9d99a0"/>
<rect x="189.70" y="261.00" width="1.60" height="5.50" fill="#9d99a0"/>
<rect x="189.70" y="645.60" width="1.60" height="5.50" fill="#9d99a0"/>
<rect x="202.20" y="261.00" width="1.60" height="5.50" fill="#9d99a0"/>
<rect x="202.20" y="645.60" width="1.60" height="5.50" fill="#9d99a0"/>
<rect x="214.70" y="261.00" width="1.60" height="9.50" fill="#9d99a0"/>
<rect x="214.70" y="641.60" width="1.60" height="9.50" fill="#9d99a0"/>
<rect x="227.20" y="261.00" width="1.60" height="5.50" fill="#9d99a0"/>
<rect x="227.20" y="645.60" width="1.60" height="5.50" fill="#9d99a0"/>
<rect x="239.70" y="261.00" width="1.60" height="5.50" fill="#9d99a0"/>
<rect x="239.70" y="645.60" width="1.60" height="5.50" fill="#9d99a0"/>
<rect x="252.20" y="261.00" width="1.60" height="5.50" fill="#9d99a0"/>
<rect x="252.20" y="645.60" width="1.60" height="5.50" fill="#9d99a0"/>
<rect x="264.70" y="261.00" width="1.60" height="5.50" fill="#9d99a0"/>
<rect x="264.70" y="645.60" width="1.60" height="5.50" fill="#9d99a0"/>
<rect x="277.20" y="261.00" width="1.60" height="9.50" fill="#9d99a0"/>
<rect x="277.20" y="641.60" width="1.60" height="9.50" fill="#9d99a0"/>
<rect x="289.70" y="261.00" width="1.60" height="5.50" fill="#9d99a0"/>
<rect x="289.70" y="645.60" width="1.60" height="5.50" fill="#9d99a0"/>
<rect x="302.20" y="261.00" width="1.60" height="5.50" fill="#9d99a0"/>
<rect x="302.20" y="645.60" width="1.60" height="5.50" fill="#9d99a0"/>
<rect x="314.70" y="261.00" width="1.60" height="5.50" fill="#9d99a0"/>
<rect x="314.70" y="645.60" width="1.60" height="5.50" fill="#9d99a0"/>
<rect x="327.20" y="261.00" width="1.60" height="5.50" fill="#9d99a0"/>
<rect x="327.20" y="645.60" width="1.60" height="5.50" fill="#9d99a0"/>
<rect x="339.70" y="261.00" width="1.60" height="9.50" fill="#9d99a0"/>
<rect x="339.70" y="641.60" width="1.60" height="9.50" fill="#9d99a0"/>
<rect x="352.20" y="261.00" width="1.60" height="5.50" fill="#9d99a0"/>
<rect x="352.20" y="645.60" width="1.60" height="5.50" fill="#9d99a0"/>
<rect x="364.70" y="261.00" width="1.60" height="5.50" fill="#9d99a0"/>
<rect x="364.70" y="645.60" width="1.60" height="5.50" fill="#9d99a0"/>
<rect x="377.20" y="261.00" width="1.60" height="5.50" fill="#9d99a0"/>
<rect x="377.20" y="645.60" width="1.60" height="5.50" fill="#9d99a0"/>
<rect x="389.70" y="261.00" width="1.60" height="5.50" fill="#9d99a0"/>
<rect x="389.70" y="645.60" width="1.60" height="5.50" fill="#9d99a0"/>
<rect x="402.20" y="261.00" width="1.60" height="9.50" fill="#9d99a0"/>
<rect x="402.20" y="641.60" width="1.60" height="9.50" fill="#9d99a0"/>
<rect x="414.70" y="261.00" width="1.60" height="5.50" fill="#9d99a0"/>
<rect x="414.70" y="645.60" width="1.60" height="5.50" fill="#9d99a0"/>
<rect x="427.20" y="261.00" width="1.60" height="5.50" fill="#9d99a0"/>
<rect x="427.20" y="645.60" width="1.60" height="5.50" fill="#9d99a0"/>
<rect x="439.70" y="261.00" width="1.60" height="5.50" fill="#9d99a0"/>
<rect x="439.70" y="645.60" width="1.60" height="5.50" fill="#9d99a0"/>
<rect x="452.20" y="261.00" width="1.60" height="5.50" fill="#9d99a0"/>
<rect x="452.20" y="645.60" width="1.60" height="5.50" fill="#9d99a0"/>
<rect x="464.70" y="261.00" width="1.60" height="9.50" fill="#9d99a0"/>
<rect x="464.70" y="641.60" width="1.60" height="9.50" fill="#9d99a0"/>
<rect x="477.20" y="261.00" width="1.60" height="5.50" fill="#9d99a0"/>
<rect x="477.20" y="645.60" width="1.60" height="5.50" fill="#9d99a0"/>
<rect x="489.70" y="261.00" width="1.60" height="5.50" fill="#9d99a0"/>
<rect x="489.70" y="645.60" width="1.60" height="5.50" fill="#9d99a0"/>
<rect x="502.20" y="261.00" width="1.60" height="5.50" fill="#9d99a0"/>
<rect x="502.20" y="645.60" width="1.60" height="5.50" fill="#9d99a0"/>
<rect x="514.70" y="261.00" width="1.60" height="5.50" fill="#9d99a0"/>
<rect x="514.70" y="645.60" width="1.60" height="5.50" fill="#9d99a0"/>
<rect x="527.20" y="261.00" width="1.60" height="9.50" fill="#9d99a0"/>
<rect x="527.20" y="641.60" width="1.60" height="9.50" fill="#9d99a0"/>
<rect x="539.70" y="261.00" width="1.60" height="5.50" fill="#9d99a0"/>
<rect x="539.70" y="645.60" width="1.60" height="5.50" fill="#9d99a0"/>
<rect x="552.20" y="261.00" width="1.60" height="5.50" fill="#9d99a0"/>
<rect x="552.20" y="645.60" width="1.60" height="5.50" fill="#9d99a0"/>
<rect x="564.70" y="261.00" width="1.60" height="5.50" fill="#9d99a0"/>
<rect x="564.70" y="645.60" width="1.60" height="5.50" fill="#9d99a0"/>
<rect x="577.20" y="261.00" width="1.60" height="5.50" fill="#9d99a0"/>
<rect x="577.20" y="645.60" width="1.60" height="5.50" fill="#9d99a0"/>
<rect x="589.70" y="261.00" width="1.60" height="9.50" fill="#9d99a0"/>
<rect x="589.70" y="641.60" width="1.60" height="9.50" fill="#9d99a0"/>
<rect x="602.20" y="261.00" width="1.60" height="5.50" fill="#9d99a0"/>
<rect x="602.20" y="645.60" width="1.60" height="5.50" fill="#9d99a0"/>
<rect x="614.70" y="261.00" width="1.60" height="5.50" fill="#9d99a0"/>
<rect x="614.70" y="645.60" width="1.60" height="5.50" fill="#9d99a0"/>
<rect x="627.20" y="261.00" width="1.60" height="5.50" fill="#9d99a0"/>
<rect x="627.20" y="645.60" width="1.60" height="5.50" fill="#9d99a0"/>
<rect x="639.70" y="261.00" width="1.60" height="5.50" fill="#9d99a0"/>
<rect x="639.70" y="645.60" width="1.60" height="5.50" fill="#9d99a0"/>
<rect x="652.20" y="261.00" width="1.60" height="9.50" fill="#9d99a0"/>
<rect x="652.20" y="641.60" width="1.60" height="9.50" fill="#9d99a0"/>
<rect x="664.70" y="261.00" width="1.60" height="5.50" fill="#9d99a0"/>
<rect x="664.70" y="645.60" width="1.60" height="5.50" fill="#9d99a0"/>
<rect x="677.20" y="261.00" width="1.60" height="5.50" fill="#9d99a0"/>
<rect x="677.20" y="645.60" width="1.60" height="5.50" fill="#9d99a0"/>
<rect x="689.70" y="261.00" width="1.60" height="5.50" fill="#9d99a0"/>
<rect x="689.70" y="645.60" width="1.60" height="5.50" fill="#9d99a0"/>
<rect x="702.20" y="261.00" width="1.60" height="5.50" fill="#9d99a0"/>
<rect x="702.20" y="645.60" width="1.60" height="5.50" fill="#9d99a0"/>
<rect x="714.70" y="261.00" width="1.60" height="9.50" fill="#9d99a0"/>
<rect x="714.70" y="641.60" width="1.60" height="9.50" fill="#9d99a0"/>
<rect x="727.20" y="261.00" width="1.60" height="5.50" fill="#9d99a0"/>
<rect x="727.20" y="645.60" width="1.60" height="5.50" fill="#9d99a0"/>
<rect x="739.70" y="261.00" width="1.60" height="5.50" fill="#9d99a0"/>
<rect x="739.70" y="645.60" width="1.60" height="5.50" fill="#9d99a0"/>
<rect x="752.20" y="261.00" width="1.60" height="5.50" fill="#9d99a0"/>
<rect x="752.20" y="645.60" width="1.60" height="5.50" fill="#9d99a0"/>
<rect x="764.70" y="261.00" width="1.60" height="5.50" fill="#9d99a0"/>
<rect x="764.70" y="645.60" width="1.60" height="5.50" fill="#9d99a0"/>
<rect x="777.20" y="261.00" width="1.60" height="9.50" fill="#9d99a0"/>
<rect x="777.20" y="641.60" width="1.60" height="9.50" fill="#9d99a0"/>
<rect x="789.70" y="261.00" width="1.60" height="5.50" fill="#9d99a0"/>
<rect x="789.70" y="645.60" width="1.60" height="5.50" fill="#9d99a0"/>
<rect x="802.20" y="261.00" width="1.60" height="5.50" fill="#9d99a0"/>
<rect x="802.20" y="645.60" width="1.60" height="5.50" fill="#9d99a0"/>
<rect x="814.70" y="261.00" width="1.60" height="5.50" fill="#9d99a0"/>
<rect x="814.70" y="645.60" width="1.60" height="5.50" fill="#9d99a0"/>
<rect x="827.20" y="261.00" width="1.60" height="5.50" fill="#9d99a0"/>
<rect x="827.20" y="645.60" width="1.60" height="5.50" fill="#9d99a0"/>
<rect x="839.70" y="261.00" width="1.60" height="9.50" fill="#9d99a0"/>
<rect x="839.70" y="641.60" width="1.60" height="9.50" fill="#9d99a0"/>
<rect x="852.20" y="261.00" width="1.60" height="5.50" fill="#9d99a0"/>
<rect x="852.20" y="645.60" width="1.60" height="5.50" fill="#9d99a0"/>
<rect x="864.70" y="261.00" width="1.60" height="5.50" fill="#9d99a0"/>
<rect x="864.70" y="645.60" width="1.60" height="5.50" fill="#9d99a0"/>
<rect x="877.20" y="261.00" width="1.60" height="5.50" fill="#9d99a0"/>
<rect x="877.20" y="645.60" width="1.60" height="5.50" fill="#9d99a0"/>
<rect x="889.70" y="261.00" width="1.60" height="5.50" fill="#9d99a0"/>
<rect x="889.70" y="645.60" width="1.60" height="5.50" fill="#9d99a0"/>
<rect x="902.20" y="261.00" width="1.60" height="9.50" fill="#9d99a0"/>
<rect x="902.20" y="641.60" width="1.60" height="9.50" fill="#9d99a0"/>
<rect x="914.70" y="261.00" width="1.60" height="5.50" fill="#9d99a0"/>
<rect x="914.70" y="645.60" width="1.60" height="5.50" fill="#9d99a0"/>
<rect x="927.20" y="261.00" width="1.60" height="5.50" fill="#9d99a0"/>
<rect x="927.20" y="645.60" width="1.60" height="5.50" fill="#9d99a0"/>
<rect x="939.70" y="261.00" width="1.60" height="5.50" fill="#9d99a0"/>
<rect x="939.70" y="645.60" width="1.60" height="5.50" fill="#9d99a0"/>
<rect x="952.20" y="261.00" width="1.60" height="5.50" fill="#9d99a0"/>
<rect x="952.20" y="645.60" width="1.60" height="5.50" fill="#9d99a0"/>
<rect x="964.70" y="261.00" width="1.60" height="9.50" fill="#9d99a0"/>
<rect x="964.70" y="641.60" width="1.60" height="9.50" fill="#9d99a0"/>
<rect x="27.30" y="270.00" width="5.00" height="1.60" fill="#9d99a0"/>
<rect x="972.90" y="270.00" width="5.00" height="1.60" fill="#9d99a0"/>
<rect x="27.30" y="277.75" width="5.00" height="1.60" fill="#9d99a0"/>
<rect x="972.90" y="277.75" width="5.00" height="1.60" fill="#9d99a0"/>
<rect x="27.30" y="285.50" width="5.00" height="1.60" fill="#9d99a0"/>
<rect x="972.90" y="285.50" width="5.00" height="1.60" fill="#9d99a0"/>
<rect x="27.30" y="293.25" width="5.00" height="1.60" fill="#9d99a0"/>
<rect x="972.90" y="293.25" width="5.00" height="1.60" fill="#9d99a0"/>
<rect x="27.30" y="301.00" width="9.00" height="1.60" fill="#9d99a0"/>
<rect x="968.90" y="301.00" width="9.00" height="1.60" fill="#9d99a0"/>
<rect x="27.30" y="308.75" width="5.00" height="1.60" fill="#9d99a0"/>
<rect x="972.90" y="308.75" width="5.00" height="1.60" fill="#9d99a0"/>
<rect x="27.30" y="316.50" width="5.00" height="1.60" fill="#9d99a0"/>
<rect x="972.90" y="316.50" width="5.00" height="1.60" fill="#9d99a0"/>
<rect x="27.30" y="324.25" width="5.00" height="1.60" fill="#9d99a0"/>
<rect x="972.90" y="324.25" width="5.00" height="1.60" fill="#9d99a0"/>
<rect x="27.30" y="332.00" width="5.00" height="1.60" fill="#9d99a0"/>
<rect x="972.90" y="332.00" width="5.00" height="1.60" fill="#9d99a0"/>
<rect x="27.30" y="339.75" width="9.00" height="1.60" fill="#9d99a0"/>
<rect x="968.90" y="339.75" width="9.00" height="1.60" fill="#9d99a0"/>
<rect x="27.30" y="347.50" width="5.00" height="1.60" fill="#9d99a0"/>
<rect x="972.90" y="347.50" width="5.00" height="1.60" fill="#9d99a0"/>
<rect x="27.30" y="355.25" width="5.00" height="1.60" fill="#9d99a0"/>
<rect x="972.90" y="355.25" width="5.00" height="1.60" fill="#9d99a0"/>
<rect x="27.30" y="363.00" width="5.00" height="1.60" fill="#9d99a0"/>
<rect x="972.90" y="363.00" width="5.00" height="1.60" fill="#9d99a0"/>
<rect x="27.30" y="370.75" width="5.00" height="1.60" fill="#9d99a0"/>
<rect x="972.90" y="370.75" width="5.00" height="1.60" fill="#9d99a0"/>
<rect x="27.30" y="378.50" width="9.00" height="1.60" fill="#9d99a0"/>
<rect x="968.90" y="378.50" width="9.00" height="1.60" fill="#9d99a0"/>
<rect x="27.30" y="386.25" width="5.00" height="1.60" fill="#9d99a0"/>
<rect x="972.90" y="386.25" width="5.00" height="1.60" fill="#9d99a0"/>
<rect x="27.30" y="394.00" width="5.00" height="1.60" fill="#9d99a0"/>
<rect x="972.90" y="394.00" width="5.00" height="1.60" fill="#9d99a0"/>
<rect x="27.30" y="401.75" width="5.00" height="1.60" fill="#9d99a0"/>
<rect x="972.90" y="401.75" width="5.00" height="1.60" fill="#9d99a0"/>
<rect x="27.30" y="409.50" width="5.00" height="1.60" fill="#9d99a0"/>
<rect x="972.90" y="409.50" width="5.00" height="1.60" fill="#9d99a0"/>
<rect x="27.30" y="417.25" width="9.00" height="1.60" fill="#9d99a0"/>
<rect x="968.90" y="417.25" width="9.00" height="1.60" fill="#9d99a0"/>
<rect x="27.30" y="425.00" width="5.00" height="1.60" fill="#9d99a0"/>
<rect x="972.90" y="425.00" width="5.00" height="1.60" fill="#9d99a0"/>
<rect x="27.30" y="432.75" width="5.00" height="1.60" fill="#9d99a0"/>
<rect x="972.90" y="432.75" width="5.00" height="1.60" fill="#9d99a0"/>
<rect x="27.30" y="440.50" width="5.00" height="1.60" fill="#9d99a0"/>
<rect x="972.90" y="440.50" width="5.00" height="1.60" fill="#9d99a0"/>
<rect x="27.30" y="448.25" width="5.00" height="1.60" fill="#9d99a0"/>
<rect x="972.90" y="448.25" width="5.00" height="1.60" fill="#9d99a0"/>
<rect x="27.30" y="456.00" width="9.00" height="1.60" fill="#9d99a0"/>
<rect x="968.90" y="456.00" width="9.00" height="1.60" fill="#9d99a0"/>
<rect x="27.30" y="463.75" width="5.00" height="1.60" fill="#9d99a0"/>
<rect x="972.90" y="463.75" width="5.00" height="1.60" fill="#9d99a0"/>
<rect x="27.30" y="471.50" width="5.00" height="1.60" fill="#9d99a0"/>
<rect x="972.90" y="471.50" width="5.00" height="1.60" fill="#9d99a0"/>
<rect x="27.30" y="479.25" width="5.00" height="1.60" fill="#9d99a0"/>
<rect x="972.90" y="479.25" width="5.00" height="1.60" fill="#9d99a0"/>
<rect x="27.30" y="487.00" width="5.00" height="1.60" fill="#9d99a0"/>
<rect x="972.90" y="487.00" width="5.00" height="1.60" fill="#9d99a0"/>
<rect x="27.30" y="494.75" width="9.00" height="1.60" fill="#9d99a0"/>
<rect x="968.90" y="494.75" width="9.00" height="1.60" fill="#9d99a0"/>
<rect x="27.30" y="502.50" width="5.00" height="1.60" fill="#9d99a0"/>
<rect x="972.90" y="502.50" width="5.00" height="1.60" fill="#9d99a0"/>
<rect x="27.30" y="510.25" width="5.00" height="1.60" fill="#9d99a0"/>
<rect x="972.90" y="510.25" width="5.00" height="1.60" fill="#9d99a0"/>
<rect x="27.30" y="518.00" width="5.00" height="1.60" fill="#9d99a0"/>
<rect x="972.90" y="518.00" width="5.00" height="1.60" fill="#9d99a0"/>
<rect x="27.30" y="525.75" width="5.00" height="1.60" fill="#9d99a0"/>
<rect x="972.90" y="525.75" width="5.00" height="1.60" fill="#9d99a0"/>
<rect x="27.30" y="533.50" width="9.00" height="1.60" fill="#9d99a0"/>
<rect x="968.90" y="533.50" width="9.00" height="1.60" fill="#9d99a0"/>
<rect x="27.30" y="541.25" width="5.00" height="1.60" fill="#9d99a0"/>
<rect x="972.90" y="541.25" width="5.00" height="1.60" fill="#9d99a0"/>
<rect x="27.30" y="549.00" width="5.00" height="1.60" fill="#9d99a0"/>
<rect x="972.90" y="549.00" width="5.00" height="1.60" fill="#9d99a0"/>
<rect x="27.30" y="556.75" width="5.00" height="1.60" fill="#9d99a0"/>
<rect x="972.90" y="556.75" width="5.00" height="1.60" fill="#9d99a0"/>
<rect x="27.30" y="564.50" width="5.00" height="1.60" fill="#9d99a0"/>
<rect x="972.90" y="564.50" width="5.00" height="1.60" fill="#9d99a0"/>
<rect x="27.30" y="572.25" width="9.00" height="1.60" fill="#9d99a0"/>
<rect x="968.90" y="572.25" width="9.00" height="1.60" fill="#9d99a0"/>
<rect x="27.30" y="580.00" width="5.00" height="1.60" fill="#9d99a0"/>
<rect x="972.90" y="580.00" width="5.00" height="1.60" fill="#9d99a0"/>
<rect x="27.30" y="587.75" width="5.00" height="1.60" fill="#9d99a0"/>
<rect x="972.90" y="587.75" width="5.00" height="1.60" fill="#9d99a0"/>
<rect x="27.30" y="595.50" width="5.00" height="1.60" fill="#9d99a0"/>
<rect x="972.90" y="595.50" width="5.00" height="1.60" fill="#9d99a0"/>
<rect x="27.30" y="603.25" width="5.00" height="1.60" fill="#9d99a0"/>
<rect x="972.90" y="603.25" width="5.00" height="1.60" fill="#9d99a0"/>
<rect x="27.30" y="611.00" width="9.00" height="1.60" fill="#9d99a0"/>
<rect x="968.90" y="611.00" width="9.00" height="1.60" fill="#9d99a0"/>
<rect x="27.30" y="618.75" width="5.00" height="1.60" fill="#9d99a0"/>
<rect x="972.90" y="618.75" width="5.00" height="1.60" fill="#9d99a0"/>
<rect x="27.30" y="626.50" width="5.00" height="1.60" fill="#9d99a0"/>
<rect x="972.90" y="626.50" width="5.00" height="1.60" fill="#9d99a0"/>
<rect x="27.30" y="634.25" width="5.00" height="1.60" fill="#9d99a0"/>
<rect x="972.90" y="634.25" width="5.00" height="1.60" fill="#9d99a0"/>
<rect x="27.30" y="642.00" width="5.00" height="1.60" fill="#9d99a0"/>
<rect x="972.90" y="642.00" width="5.00" height="1.60" fill="#9d99a0"/>
<rect x="39.75" y="454.80" width="1.50" height="4.00" fill="#9d99a0"/>
<rect x="52.25" y="454.80" width="1.50" height="4.00" fill="#9d99a0"/>
<rect x="64.75" y="454.80" width="1.50" height="4.00" fill="#9d99a0"/>
<rect x="77.25" y="454.80" width="1.50" height="4.00" fill="#9d99a0"/>
<rect x="89.75" y="454.80" width="1.50" height="4.00" fill="#9d99a0"/>
<rect x="102.25" y="454.80" width="1.50" height="4.00" fill="#9d99a0"/>
<rect x="114.75" y="454.80" width="1.50" height="4.00" fill="#9d99a0"/>
<rect x="127.25" y="454.80" width="1.50" height="4.00" fill="#9d99a0"/>
<rect x="139.75" y="454.80" width="1.50" height="4.00" fill="#9d99a0"/>
<rect x="152.25" y="454.80" width="1.50" height="4.00" fill="#9d99a0"/>
<rect x="164.75" y="454.80" width="1.50" height="4.00" fill="#9d99a0"/>
<rect x="177.25" y="454.80" width="1.50" height="4.00" fill="#9d99a0"/>
<rect x="189.75" y="454.80" width="1.50" height="4.00" fill="#9d99a0"/>
<rect x="202.25" y="454.80" width="1.50" height="4.00" fill="#9d99a0"/>
<rect x="214.75" y="454.80" width="1.50" height="4.00" fill="#9d99a0"/>
<rect x="227.25" y="454.80" width="1.50" height="4.00" fill="#9d99a0"/>
<rect x="239.75" y="454.80" width="1.50" height="4.00" fill="#9d99a0"/>
<rect x="252.25" y="454.80" width="1.50" height="4.00" fill="#9d99a0"/>
<rect x="264.75" y="454.80" width="1.50" height="4.00" fill="#9d99a0"/>
<rect x="277.25" y="454.80" width="1.50" height="4.00" fill="#9d99a0"/>
<rect x="289.75" y="454.80" width="1.50" height="4.00" fill="#9d99a0"/>
<rect x="302.25" y="454.80" width="1.50" height="4.00" fill="#9d99a0"/>
<rect x="314.75" y="454.80" width="1.50" height="4.00" fill="#9d99a0"/>
<rect x="327.25" y="454.80" width="1.50" height="4.00" fill="#9d99a0"/>
<rect x="339.75" y="454.80" width="1.50" height="4.00" fill="#9d99a0"/>
<rect x="352.25" y="454.80" width="1.50" height="4.00" fill="#9d99a0"/>
<rect x="364.75" y="454.80" width="1.50" height="4.00" fill="#9d99a0"/>
<rect x="377.25" y="454.80" width="1.50" height="4.00" fill="#9d99a0"/>
<rect x="389.75" y="454.80" width="1.50" height="4.00" fill="#9d99a0"/>
<rect x="402.25" y="454.80" width="1.50" height="4.00" fill="#9d99a0"/>
<rect x="414.75" y="454.80" width="1.50" height="4.00" fill="#9d99a0"/>
<rect x="427.25" y="454.80" width="1.50" height="4.00" fill="#9d99a0"/>
<rect x="439.75" y="454.80" width="1.50" height="4.00" fill="#9d99a0"/>
<rect x="452.25" y="454.80" width="1.50" height="4.00" fill="#9d99a0"/>
<rect x="464.75" y="454.80" width="1.50" height="4.00" fill="#9d99a0"/>
<rect x="477.25" y="454.80" width="1.50" height="4.00" fill="#9d99a0"/>
<rect x="489.75" y="454.80" width="1.50" height="4.00" fill="#9d99a0"/>
<rect x="502.25" y="454.80" width="1.50" height="4.00" fill="#9d99a0"/>
<rect x="514.75" y="454.80" width="1.50" height="4.00" fill="#9d99a0"/>
<rect x="527.25" y="454.80" width="1.50" height="4.00" fill="#9d99a0"/>
<rect x="539.75" y="454.80" width="1.50" height="4.00" fill="#9d99a0"/>
<rect x="552.25" y="454.80" width="1.50" height="4.00" fill="#9d99a0"/>
<rect x="564.75" y="454.80" width="1.50" height="4.00" fill="#9d99a0"/>
<rect x="577.25" y="454.80" width="1.50" height="4.00" fill="#9d99a0"/>
<rect x="589.75" y="454.80" width="1.50" height="4.00" fill="#9d99a0"/>
<rect x="602.25" y="454.80" width="1.50" height="4.00" fill="#9d99a0"/>
<rect x="614.75" y="454.80" width="1.50" height="4.00" fill="#9d99a0"/>
<rect x="627.25" y="454.80" width="1.50" height="4.00" fill="#9d99a0"/>
<rect x="639.75" y="454.80" width="1.50" height="4.00" fill="#9d99a0"/>
<rect x="652.25" y="454.80" width="1.50" height="4.00" fill="#9d99a0"/>
<rect x="664.75" y="454.80" width="1.50" height="4.00" fill="#9d99a0"/>
<rect x="677.25" y="454.80" width="1.50" height="4.00" fill="#9d99a0"/>
<rect x="689.75" y="454.80" width="1.50" height="4.00" fill="#9d99a0"/>
<rect x="702.25" y="454.80" width="1.50" height="4.00" fill="#9d99a0"/>
<rect x="714.75" y="454.80" width="1.50" height="4.00" fill="#9d99a0"/>
<rect x="727.25" y="454.80" width="1.50" height="4.00" fill="#9d99a0"/>
<rect x="739.75" y="454.80" width="1.50" height="4.00" fill="#9d99a0"/>
<rect x="752.25" y="454.80" width="1.50" height="4.00" fill="#9d99a0"/>
<rect x="764.75" y="454.80" width="1.50" height="4.00" fill="#9d99a0"/>
<rect x="777.25" y="454.80" width="1.50" height="4.00" fill="#9d99a0"/>
<rect x="789.75" y="454.80" width="1.50" height="4.00" fill="#9d99a0"/>
<rect x="802.25" y="454.80" width="1.50" height="4.00" fill="#9d99a0"/>
<rect x="814.75" y="454.80" width="1.50" height="4.00" fill="#9d99a0"/>
<rect x="827.25" y="454.80" width="1.50" height="4.00" fill="#9d99a0"/>
<rect x="839.75" y="454.80" width="1.50" height="4.00" fill="#9d99a0"/>
<rect x="852.25" y="454.80" width="1.50" height="4.00" fill="#9d99a0"/>
<rect x="864.75" y="454.80" width="1.50" height="4.00" fill="#9d99a0"/>
<rect x="877.25" y="454.80" width="1.50" height="4.00" fill="#9d99a0"/>
<rect x="889.75" y="454.80" width="1.50" height="4.00" fill="#9d99a0"/>
<rect x="902.25" y="454.80" width="1.50" height="4.00" fill="#9d99a0"/>
<rect x="914.75" y="454.80" width="1.50" height="4.00" fill="#9d99a0"/>
<rect x="927.25" y="454.80" width="1.50" height="4.00" fill="#9d99a0"/>
<rect x="939.75" y="454.80" width="1.50" height="4.00" fill="#9d99a0"/>
<rect x="952.25" y="454.80" width="1.50" height="4.00" fill="#9d99a0"/>
<rect x="964.75" y="454.80" width="1.50" height="4.00" fill="#9d99a0"/>
<rect x="500.90" y="270.05" width="4.00" height="1.50" fill="#9d99a0"/>
<rect x="500.90" y="277.80" width="4.00" height="1.50" fill="#9d99a0"/>
<rect x="500.90" y="285.55" width="4.00" height="1.50" fill="#9d99a0"/>
<rect x="500.90" y="293.30" width="4.00" height="1.50" fill="#9d99a0"/>
<rect x="500.90" y="301.05" width="4.00" height="1.50" fill="#9d99a0"/>
<rect x="500.90" y="308.80" width="4.00" height="1.50" fill="#9d99a0"/>
<rect x="500.90" y="316.55" width="4.00" height="1.50" fill="#9d99a0"/>
<rect x="500.90" y="324.30" width="4.00" height="1.50" fill="#9d99a0"/>
<rect x="500.90" y="332.05" width="4.00" height="1.50" fill="#9d99a0"/>
<rect x="500.90" y="339.80" width="4.00" height="1.50" fill="#9d99a0"/>
<rect x="500.90" y="347.55" width="4.00" height="1.50" fill="#9d99a0"/>
<rect x="500.90" y="355.30" width="4.00" height="1.50" fill="#9d99a0"/>
<rect x="500.90" y="363.05" width="4.00" height="1.50" fill="#9d99a0"/>
<rect x="500.90" y="370.80" width="4.00" height="1.50" fill="#9d99a0"/>
<rect x="500.90" y="378.55" width="4.00" height="1.50" fill="#9d99a0"/>
<rect x="500.90" y="386.30" width="4.00" height="1.50" fill="#9d99a0"/>
<rect x="500.90" y="394.05" width="4.00" height="1.50" fill="#9d99a0"/>
<rect x="500.90" y="401.80" width="4.00" height="1.50" fill="#9d99a0"/>
<rect x="500.90" y="409.55" width="4.00" height="1.50" fill="#9d99a0"/>
<rect x="500.90" y="417.30" width="4.00" height="1.50" fill="#9d99a0"/>
<rect x="500.90" y="425.05" width="4.00" height="1.50" fill="#9d99a0"/>
<rect x="500.90" y="432.80" width="4.00" height="1.50" fill="#9d99a0"/>
<rect x="500.90" y="440.55" width="4.00" height="1.50" fill="#9d99a0"/>
<rect x="500.90" y="448.30" width="4.00" height="1.50" fill="#9d99a0"/>
<rect x="500.90" y="456.05" width="4.00" height="1.50" fill="#9d99a0"/>
<rect x="500.90" y="463.80" width="4.00" height="1.50" fill="#9d99a0"/>
<rect x="500.90" y="471.55" width="4.00" height="1.50" fill="#9d99a0"/>
<rect x="500.90" y="479.30" width="4.00" height="1.50" fill="#9d99a0"/>
<rect x="500.90" y="487.05" width="4.00" height="1.50" fill="#9d99a0"/>
<rect x="500.90" y="494.80" width="4.00" height="1.50" fill="#9d99a0"/>
<rect x="500.90" y="502.55" width="4.00" height="1.50" fill="#9d99a0"/>
<rect x="500.90" y="510.30" width="4.00" height="1.50" fill="#9d99a0"/>
<rect x="500.90" y="518.05" width="4.00" height="1.50" fill="#9d99a0"/>
<rect x="500.90" y="525.80" width="4.00" height="1.50" fill="#9d99a0"/>
<rect x="500.90" y="533.55" width="4.00" height="1.50" fill="#9d99a0"/>
<rect x="500.90" y="541.30" width="4.00" height="1.50" fill="#9d99a0"/>
<rect x="500.90" y="549.05" width="4.00" height="1.50" fill="#9d99a0"/>
<rect x="500.90" y="556.80" width="4.00" height="1.50" fill="#9d99a0"/>
<rect x="500.90" y="564.55" width="4.00" height="1.50" fill="#9d99a0"/>
<rect x="500.90" y="572.30" width="4.00" height="1.50" fill="#9d99a0"/>
<rect x="500.90" y="580.05" width="4.00" height="1.50" fill="#9d99a0"/>
<rect x="500.90" y="587.80" width="4.00" height="1.50" fill="#9d99a0"/>
<rect x="500.90" y="595.55" width="4.00" height="1.50" fill="#9d99a0"/>
<rect x="500.90" y="603.30" width="4.00" height="1.50" fill="#9d99a0"/>
<rect x="500.90" y="611.05" width="4.00" height="1.50" fill="#9d99a0"/>
<rect x="500.90" y="618.80" width="4.00" height="1.50" fill="#9d99a0"/>
<rect x="500.90" y="626.55" width="4.00" height="1.50" fill="#9d99a0"/>
<rect x="500.90" y="634.30" width="4.00" height="1.50" fill="#9d99a0"/>
<rect x="500.90" y="642.05" width="4.00" height="1.50" fill="#9d99a0"/>
<rect x="500.90" y="454.80" width="4.00" height="4.00" fill="#9d99a0"/>
<rect x="27.50" y="315.00" width="950.00" height="2.80" fill="#eddc66"/>
<rect x="27.50" y="353.80" width="950.00" height="1.50" fill="#9ab2e8"/>
<rect x="32.00" y="313.70" width="1.00" height="1.30" fill="#e9d84a"/>
<rect x="36.50" y="313.70" width="1.00" height="1.30" fill="#e9d84a"/>
<rect x="40.50" y="313.70" width="1.00" height="1.30" fill="#e9d84a"/>
<rect x="52.50" y="313.70" width="1.50" height="1.30" fill="#e9d84a"/>
<rect x="55.00" y="313.70" width="2.00" height="1.30" fill="#e9d84a"/>
<rect x="57.50" y="313.70" width="4.00" height="1.30" fill="#e9d84a"/>
<rect x="64.50" y="313.70" width="2.00" height="1.30" fill="#e9d84a"/>
<rect x="112.00" y="313.70" width="4.00" height="1.30" fill="#e9d84a"/>
<rect x="123.00" y="313.70" width="2.00" height="1.30" fill="#e9d84a"/>
<rect x="128.00" y="313.70" width="2.00" height="1.30" fill="#e9d84a"/>
<rect x="131.00" y="313.70" width="1.50" height="1.30" fill="#e9d84a"/>
<rect x="134.50" y="313.70" width="4.00" height="1.30" fill="#e9d84a"/>
<rect x="140.50" y="313.70" width="3.00" height="1.30" fill="#e9d84a"/>
<rect x="144.00" y="313.70" width="1.00" height="1.30" fill="#e9d84a"/>
<rect x="146.00" y="313.70" width="2.00" height="1.30" fill="#e9d84a"/>
<rect x="151.00" y="313.70" width="3.00" height="1.30" fill="#e9d84a"/>
<rect x="174.00" y="313.70" width="1.00" height="1.30" fill="#e9d84a"/>
<rect x="197.50" y="313.70" width="1.00" height="1.30" fill="#e9d84a"/>
<rect x="253.00" y="313.70" width="1.00" height="1.30" fill="#e9d84a"/>
<rect x="257.00" y="313.70" width="4.00" height="1.30" fill="#e9d84a"/>
<rect x="273.00" y="313.70" width="1.50" height="1.30" fill="#e9d84a"/>
<rect x="275.50" y="313.70" width="1.50" height="1.30" fill="#e9d84a"/>
<rect x="278.00" y="313.70" width="1.00" height="1.30" fill="#e9d84a"/>
<rect x="280.00" y="313.70" width="2.00" height="1.30" fill="#e9d84a"/>
<rect x="283.00" y="313.70" width="3.00" height="1.30" fill="#e9d84a"/>
<rect x="296.00" y="313.70" width="3.00" height="1.30" fill="#e9d84a"/>
<rect x="303.00" y="313.70" width="1.50" height="1.30" fill="#e9d84a"/>
<rect x="305.50" y="313.70" width="3.00" height="1.30" fill="#e9d84a"/>
<rect x="345.00" y="313.70" width="4.00" height="1.30" fill="#e9d84a"/>
<rect x="349.50" y="313.70" width="4.00" height="1.30" fill="#e9d84a"/>
<rect x="363.00" y="313.70" width="3.00" height="1.30" fill="#e9d84a"/>
<rect x="369.00" y="313.70" width="3.00" height="1.30" fill="#e9d84a"/>
<rect x="374.00" y="313.70" width="1.00" height="1.30" fill="#e9d84a"/>
<rect x="387.00" y="313.70" width="2.00" height="1.30" fill="#e9d84a"/>
<rect x="390.00" y="313.70" width="4.00" height="1.30" fill="#e9d84a"/>
<rect x="398.00" y="313.70" width="4.00" height="1.30" fill="#e9d84a"/>
<rect x="402.50" y="313.70" width="2.00" height="1.30" fill="#e9d84a"/>
<rect x="414.50" y="313.70" width="1.50" height="1.30" fill="#e9d84a"/>
<rect x="421.00" y="313.70" width="3.00" height="1.30" fill="#e9d84a"/>
<rect x="445.00" y="313.70" width="2.00" height="1.30" fill="#e9d84a"/>
<rect x="447.50" y="313.70" width="1.50" height="1.30" fill="#e9d84a"/>
<rect x="451.00" y="313.70" width="1.50" height="1.30" fill="#e9d84a"/>
<rect x="491.00" y="313.70" width="2.00" height="1.30" fill="#e9d84a"/>
<rect x="496.00" y="313.70" width="3.00" height="1.30" fill="#e9d84a"/>
<rect x="499.50" y="313.70" width="1.50" height="1.30" fill="#e9d84a"/>
<rect x="502.00" y="313.70" width="1.00" height="1.30" fill="#e9d84a"/>
<rect x="510.50" y="313.70" width="2.00" height="1.30" fill="#e9d84a"/>
<rect x="513.50" y="313.70" width="1.00" height="1.30" fill="#e9d84a"/>
<rect x="524.00" y="313.70" width="1.50" height="1.30" fill="#e9d84a"/>
<rect x="575.00" y="313.70" width="2.00" height="1.30" fill="#e9d84a"/>
<rect x="579.00" y="313.70" width="2.00" height="1.30" fill="#e9d84a"/>
<rect x="726.00" y="313.70" width="4.00" height="1.30" fill="#e9d84a"/>
<rect x="731.00" y="313.70" width="4.00" height="1.30" fill="#e9d84a"/>
<rect x="740.50" y="313.70" width="1.50" height="1.30" fill="#e9d84a"/>
<rect x="742.50" y="313.70" width="4.00" height="1.30" fill="#e9d84a"/>
<rect x="751.00" y="313.70" width="1.50" height="1.30" fill="#e9d84a"/>
<rect x="753.00" y="313.70" width="1.00" height="1.30" fill="#e9d84a"/>
<rect x="754.50" y="313.70" width="1.00" height="1.30" fill="#e9d84a"/>
<rect x="756.50" y="313.70" width="2.00" height="1.30" fill="#e9d84a"/>
<rect x="790.00" y="313.70" width="3.00" height="1.30" fill="#e9d84a"/>
<rect x="793.50" y="313.70" width="3.00" height="1.30" fill="#e9d84a"/>
<rect x="820.00" y="313.70" width="1.50" height="1.30" fill="#e9d84a"/>
<rect x="900.00" y="313.70" width="2.00" height="1.30" fill="#e9d84a"/>
<rect x="903.00" y="313.70" width="3.00" height="1.30" fill="#e9d84a"/>
<rect x="36.50" y="355.30" width="3.00" height="1.20" fill="#84aaec"/>
<rect x="43.50" y="355.30" width="12.00" height="1.20" fill="#84aaec"/>
<rect x="62.00" y="355.30" width="3.00" height="1.20" fill="#84aaec"/>
<rect x="66.00" y="355.30" width="5.00" height="1.20" fill="#84aaec"/>
<rect x="87.00" y="355.30" width="5.00" height="1.20" fill="#84aaec"/>
<rect x="111.00" y="355.30" width="2.00" height="1.20" fill="#84aaec"/>
<rect x="114.00" y="355.30" width="3.00" height="1.20" fill="#84aaec"/>
<rect x="128.50" y="355.30" width="8.00" height="1.20" fill="#84aaec"/>
<rect x="165.00" y="355.30" width="5.00" height="1.20" fill="#84aaec"/>
<rect x="171.00" y="355.30" width="3.00" height="1.20" fill="#84aaec"/>
<rect x="181.00" y="355.30" width="5.00" height="1.20" fill="#84aaec"/>
<rect x="187.50" y="355.30" width="2.00" height="1.20" fill="#84aaec"/>
<rect x="190.50" y="355.30" width="8.00" height="1.20" fill="#84aaec"/>
<rect x="240.00" y="355.30" width="5.00" height="1.20" fill="#84aaec"/>
<rect x="259.00" y="355.30" width="3.00" height="1.20" fill="#84aaec"/>
<rect x="324.00" y="355.30" width="8.00" height="1.20" fill="#84aaec"/>
<rect x="333.50" y="355.30" width="5.00" height="1.20" fill="#84aaec"/>
<rect x="339.50" y="355.30" width="5.00" height="1.20" fill="#84aaec"/>
<rect x="365.00" y="355.30" width="12.00" height="1.20" fill="#84aaec"/>
<rect x="378.50" y="355.30" width="12.00" height="1.20" fill="#84aaec"/>
<rect x="420.00" y="355.30" width="2.00" height="1.20" fill="#84aaec"/>
<rect x="426.00" y="355.30" width="8.00" height="1.20" fill="#84aaec"/>
<rect x="438.00" y="355.30" width="12.00" height="1.20" fill="#84aaec"/>
<rect x="451.50" y="355.30" width="3.00" height="1.20" fill="#84aaec"/>
<rect x="465.00" y="355.30" width="3.00" height="1.20" fill="#84aaec"/>
<rect x="490.00" y="355.30" width="8.00" height="1.20" fill="#84aaec"/>
<rect x="515.00" y="355.30" width="12.00" height="1.20" fill="#84aaec"/>
<rect x="529.00" y="355.30" width="2.00" height="1.20" fill="#84aaec"/>
<rect x="532.50" y="355.30" width="5.00" height="1.20" fill="#84aaec"/>
<rect x="546.50" y="355.30" width="3.00" height="1.20" fill="#84aaec"/>
<rect x="551.50" y="355.30" width="3.00" height="1.20" fill="#84aaec"/>
<rect x="555.50" y="355.30" width="5.00" height="1.20" fill="#84aaec"/>
<rect x="564.50" y="355.30" width="5.00" height="1.20" fill="#84aaec"/>
<rect x="571.00" y="355.30" width="3.00" height="1.20" fill="#84aaec"/>
<rect x="575.00" y="355.30" width="2.00" height="1.20" fill="#84aaec"/>
<rect x="578.00" y="355.30" width="3.00" height="1.20" fill="#84aaec"/>
<rect x="670.00" y="355.30" width="8.00" height="1.20" fill="#84aaec"/>
<rect x="680.00" y="355.30" width="3.00" height="1.20" fill="#84aaec"/>
<rect x="684.50" y="355.30" width="12.00" height="1.20" fill="#84aaec"/>
<rect x="710.00" y="355.30" width="8.00" height="1.20" fill="#84aaec"/>
<rect x="725.50" y="355.30" width="12.00" height="1.20" fill="#84aaec"/>
<rect x="765.00" y="355.30" width="2.00" height="1.20" fill="#84aaec"/>
<rect x="777.50" y="355.30" width="8.00" height="1.20" fill="#84aaec"/>
<rect x="786.50" y="355.30" width="12.00" height="1.20" fill="#84aaec"/>
<rect x="850.00" y="355.30" width="5.00" height="1.20" fill="#84aaec"/>
<rect x="869.00" y="355.30" width="12.00" height="1.20" fill="#84aaec"/>
<rect x="25.00" y="258.80" width="955.20" height="2.40" fill="#9d99a0"/>
<rect x="25.00" y="651.10" width="955.20" height="2.40" fill="#9d99a0"/>
<rect x="25.00" y="258.80" width="2.40" height="394.70" fill="#9d99a0"/>
<rect x="977.80" y="258.80" width="2.40" height="394.70" fill="#9d99a0"/>
<path d="M495.6,261.2 H509.2 V275.4 L502.4,280 L495.6,275.4 Z" fill="#070309" stroke="#dcae30" stroke-width="1.5"/>
<rect x="497.80" y="265.80" width="9.50" height="2.30" fill="#e8c040"/>
<rect x="501.50" y="265.80" width="2.10" height="9.40" fill="#e8c040"/>
<polygon points="0.5,253.8 17.5,253.8 24.5,261.7 17.5,270 0.5,270 5.5,261.7" fill="#e9d84a"/>
<path d="M14.3,256.3 V267 H11.8 V260.2 C11.1,260.8 10.3,261.2 9.4,261.5 V259.5 C10.6,259 11.6,258 12.2,256.3 Z" fill="#15100a"/>
<path d="M1,355 H17.3 L24.4,362.3 L17.3,369.6 H1 L7,362.3 Z" fill="#070309" stroke="#9cb6f0" stroke-width="1.4"/>
<text x="8.0" y="367.0" fill="#a4bcf2" font-size="15.2" letter-spacing="0"  font-family="Liberation Sans" font-weight="bold">2</text>
<path d="M980.4,354.7 L1000,346.2 L1000,349.2 L997,354.7 L1000,360.5 L1000,363 Z" fill="#84aaec"/>
<rect x="447.00" y="404.00" width="30.50" height="34.00" fill="#070309"/>
<rect x="447.00" y="481.00" width="30.50" height="31.00" fill="#070309"/>
<rect x="527.00" y="404.00" width="34.00" height="34.00" fill="#070309"/>
<rect x="527.00" y="481.00" width="34.00" height="31.00" fill="#070309"/>
<rect x="372.00" y="447.00" width="50.00" height="19.00" fill="#070309"/>
<rect x="584.00" y="447.00" width="63.00" height="19.00" fill="#070309"/>
<rect x="377.30" y="440.00" width="1.20" height="30.00" fill="#423e46"/>
<path d="M461.7,409.6 L470.5,421.0 H466.3 V433.90000000000003 H457.09999999999997 V421.0 H452.9 Z" fill="#e9d84a"/>
<path d="M461.7,508.6 L470.5,497.20000000000005 H466.3 V485.40000000000003 H457.09999999999997 V497.20000000000005 H452.9 Z" fill="#e9d84a"/>
<path d="M543.3,409.6 L552.0999999999999,421.0 H547.9 V433.90000000000003 H538.6999999999999 V421.0 H534.5 Z" fill="#84aaec"/>
<path d="M543.3,508.6 L552.0999999999999,497.20000000000005 H547.9 V485.40000000000003 H538.6999999999999 V497.20000000000005 H534.5 Z" fill="#84aaec"/>
<path d="M392.3,456.8 L404.0,447.95 V452.15000000000003 H416.3 V461.45 H404.0 V465.65000000000003 Z" fill="#ecebee"/>
<path d="M612.9,456.8 L601.1999999999999,447.95 V452.15000000000003 H588.6999999999999 V461.45 H601.1999999999999 V465.65000000000003 Z" fill="#ecebee"/>
<text x="454.5" y="406" fill="#e9d84a" font-size="19.5" letter-spacing="0.8" stroke="#070309" stroke-width="0.25" >V</text>
<text x="536.8" y="406" fill="#84aaec" font-size="19.5" letter-spacing="0.8" stroke="#070309" stroke-width="0.25" >V</text>
<text x="448" y="525.7" fill="#e9d84a" font-size="19.5" letter-spacing="0.8" stroke="#070309" stroke-width="0.25" >mV</text>
<text x="529.5" y="525.7" fill="#84aaec" font-size="19.5" letter-spacing="0.8" stroke="#070309" stroke-width="0.25" >mV</text>
<text x="375.5" y="462.8" fill="#ecebee" font-size="19.5" letter-spacing="0.8" stroke="#070309" stroke-width="0.25" >S</text>
<text x="617.5" y="462.8" fill="#ecebee" font-size="19.5" letter-spacing="0.8" stroke="#070309" stroke-width="0.25" >nS</text>
<text x="25" y="673" fill="#ecebee" font-size="19.5" letter-spacing="0.8" stroke="#070309" stroke-width="0.25" >M:&#160;2.0us&#160;&#160;&#160;&#160;(500MS/s)&#160;&#160;&#160;Depth:10M(8-bit)</text>
<text x="785" y="674" fill="#8fa3dc" font-size="19.5" letter-spacing="0.8" stroke="#070309" stroke-width="0.25" >CH2:DC-</text>
<path d="M873,674.3 H881.3 L886.8,660 H897" fill="none" stroke="#8fa3dc" stroke-width="1.6"/>
<text x="898" y="674" fill="#8fa3dc" font-size="19.5" letter-spacing="0.8" stroke="#070309" stroke-width="0.25" >1.10V</text>
<rect x="0.00" y="677.00" width="1000.00" height="73.00" fill="#443e5e"/>
<rect x="977.00" y="677.00" width="23.00" height="73.00" fill="#60628a"/>
<rect x="400.60" y="677.00" width="1.80" height="73.00" fill="#100c1a"/>
<rect x="515.80" y="677.00" width="1.80" height="73.00" fill="#100c1a"/>
<rect x="630.70" y="677.00" width="1.80" height="73.00" fill="#100c1a"/>
<rect x="745.90" y="677.00" width="1.80" height="73.00" fill="#100c1a"/>
<rect x="860.90" y="677.00" width="1.80" height="73.00" fill="#100c1a"/>
<rect x="975.40" y="677.00" width="1.80" height="73.00" fill="#100c1a"/>
<rect x="2.30" y="687.50" width="20.30" height="20.10" fill="#f2d83a"/>
<path d="M12.9,691.4 V703.6 H10.1 V695.6 C9.3,696.3 8.5,696.8 7.5,697.1 V694.8 C8.8,694.2 9.9,693.2 10.6,691.4 Z" fill="#101010"/>
<rect x="2.30" y="718.90" width="20.30" height="19.80" fill="#8cb6f4"/>
<text x="7.3" y="735.7" fill="#101010" font-size="18.3" letter-spacing="0"  font-family="Liberation Sans" font-weight="bold">2</text>
<text x="25" y="704.5" fill="#e0d47a" font-size="19.5" letter-spacing="0.8" stroke="#443e5e" stroke-width="0.25" >1.00V~</text>
<text x="143" y="704.5" fill="#e0d47a" font-size="19.5" letter-spacing="0.8" stroke="#443e5e" stroke-width="0.25" >13.48div</text>
<text x="25" y="735.5" fill="#98acde" font-size="19.5" letter-spacing="0.8" stroke="#443e5e" stroke-width="0.25" >5.00V-</text>
<text x="143" y="735.5" fill="#98acde" font-size="19.5" letter-spacing="0.8" stroke="#443e5e" stroke-width="0.25" >2.46div</text>
<text x="248" y="735.5" fill="#98acde" font-size="19.5" letter-spacing="0.8" stroke="#443e5e" stroke-width="0.25" >&lt;2Hz</text>
<text x="421.5" y="705.3" fill="#ecebee" font-size="19.5" letter-spacing="0.8" stroke="#443e5e" stroke-width="0.25" >Single</text>
<rect x="433.50" y="715.80" width="52.00" height="25.20" fill="#c9c9cb"/>
<text x="434.5" y="735.3" fill="#0c0c0c" font-size="19.5" letter-spacing="0.8" stroke="#c9c9cb" stroke-width="0.25" >Edge</text>
<text x="536.0" y="705.3" fill="#ecebee" font-size="19.5" letter-spacing="0.8" stroke="#443e5e" stroke-width="0.25" >Source</text>
<rect x="554.25" y="715.80" width="39.50" height="25.20" fill="#c9c9cb"/>
<text x="555.25" y="735.3" fill="#0c0c0c" font-size="19.5" letter-spacing="0.8" stroke="#c9c9cb" stroke-width="0.25" >CH2</text>
<text x="638.5" y="705.3" fill="#ecebee" font-size="19.5" letter-spacing="0.8" stroke="#443e5e" stroke-width="0.25" >Coupling</text>
<rect x="675.50" y="715.80" width="27.00" height="25.20" fill="#c9c9cb"/>
<text x="676.5" y="735.3" fill="#0c0c0c" font-size="19.5" letter-spacing="0.8" stroke="#c9c9cb" stroke-width="0.25" >DC</text>
<text x="771.75" y="705.3" fill="#ecebee" font-size="19.5" letter-spacing="0.8" stroke="#443e5e" stroke-width="0.25" >Slope</text>
<rect x="747.40" y="713.70" width="56.40" height="30.30" fill="#c9c9cb"/>
<rect x="747.40" y="740.70" width="17.30" height="2.80" fill="#000"/>
<rect x="785.60" y="713.70" width="18.20" height="2.30" fill="#000"/>
<path d="M764.2,742.4 L786.4,714.5" fill="none" stroke="#000" stroke-width="1.7"/>
<path d="M769,725.1 L778.7,723.6 L778.3,733.9 Z" fill="#000"/>
<rect x="808.90" y="714.90" width="15.00" height="3.90" fill="#ecebee"/>
<rect x="841.30" y="738.60" width="16.50" height="4.20" fill="#ecebee"/>
<path d="M823.2,716.2 L842,739.6" fill="none" stroke="#ecebee" stroke-width="1.9"/>
<path d="M828,731.6 L836,724.2 L836.6,733.2 Z" fill="#ecebee"/>
<text x="893.0" y="705.3" fill="#ecebee" font-size="19.5" letter-spacing="0.8" stroke="#443e5e" stroke-width="0.25" >Auto</text>
<text x="868.5" y="735" fill="#ecebee" font-size="19.5" letter-spacing="0.8" stroke="#443e5e" stroke-width="0.25" >&amp;Holdoff</text>
</g></svg>
</body></html>
